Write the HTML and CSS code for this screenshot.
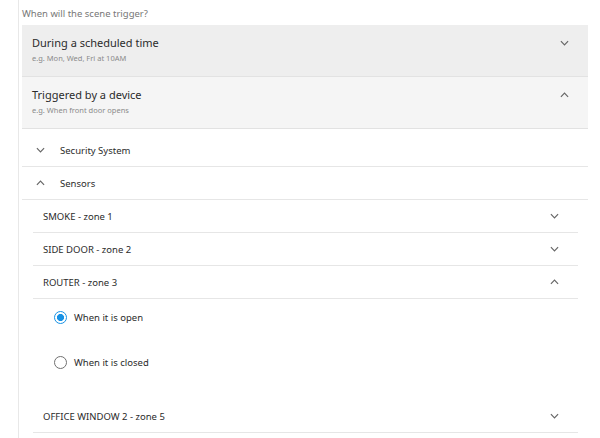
FILE: index.html
```html
<!DOCTYPE html>
<html>
<head>
<meta charset="utf-8">
<link rel="stylesheet" href="styles.css">
</head>
<body>
<div class="page">
  <div class="question">When will the scene trigger?</div>

  <div class="option option-dark">
    <div class="option-head">
      <span class="option-title">During a scheduled time</span>
      <svg class="chev" viewBox="0 0 10 6"><polyline points="1,1 5,5 9,1"/></svg>
    </div>
    <div class="option-sub">e.g. Mon, Wed, Fri at 10AM</div>
  </div>

  <div class="option option-light">
    <div class="option-head">
      <span class="option-title">Triggered by a device</span>
      <svg class="chev" viewBox="0 0 10 6"><polyline points="1,5 5,1 9,5"/></svg>
    </div>
    <div class="option-sub">e.g. When front door opens</div>
  </div>

  <div class="groups">
    <div class="group-row">
      <svg class="chev" viewBox="0 0 10 6"><polyline points="1,1 5,5 9,1"/></svg>
      <span class="group-label">Security System</span>
    </div>
    <div class="group-row">
      <svg class="chev" viewBox="0 0 10 6"><polyline points="1,5 5,1 9,5"/></svg>
      <span class="group-label">Sensors</span>
    </div>

    <div class="zones">
      <div class="zone-row">
        <span class="zone-label">SMOKE - zone 1</span>
        <svg class="chev" viewBox="0 0 10 6"><polyline points="1,1 5,5 9,1"/></svg>
      </div>
      <div class="zone-row">
        <span class="zone-label">SIDE DOOR - zone 2</span>
        <svg class="chev" viewBox="0 0 10 6"><polyline points="1,1 5,5 9,1"/></svg>
      </div>
      <div class="zone-row">
        <span class="zone-label">ROUTER - zone 3</span>
        <svg class="chev" viewBox="0 0 10 6"><polyline points="1,5 5,1 9,5"/></svg>
      </div>
      <div class="radios">
        <div class="radio-item">
          <span class="radio radio-on"></span>
          <span class="radio-label">When it is open</span>
        </div>
        <div class="radio-item">
          <span class="radio"></span>
          <span class="radio-label">When it is closed</span>
        </div>
      </div>
      <div class="zone-row">
        <span class="zone-label">OFFICE WINDOW 2 - zone 5</span>
        <svg class="chev" viewBox="0 0 10 6"><polyline points="1,1 5,5 9,1"/></svg>
      </div>
    </div>
  </div>
</div>
</body>
</html>
```

FILE: styles.css
```css
html, body {
  margin: 0;
  padding: 0;
  background: #ffffff;
}

body {
  font-family: "Noto Sans", "Liberation Sans", sans-serif;
  color: #2b2b2b;
}

.page {
  margin-left: 18px;
  margin-right: 12px;
  border-left: 1px solid #e8e8e8;
  padding-left: 3px;
  min-height: 438px;
  box-sizing: border-box;
}

.question {
  padding-top: 8px;
  height: 12px;
  line-height: 12px;
  font-size: 9.5px;
  color: #777777;
  margin-bottom: 5px;
}

.option {
  padding: 11px 19px 13px 10px;
  border-bottom: 1px solid #e2e2e2;
}

.option-dark {
  background: #eeeeee;
}

.option-light {
  background: #f5f5f5;
}

.option-head {
  display: flex;
  align-items: center;
  justify-content: space-between;
  height: 14px;
}

.option-title {
  font-size: 11px;
  line-height: 14px;
  color: #2b2b2b;
}

.option-sub {
  margin-top: 3px;
  font-size: 7.5px;
  line-height: 10px;
  color: #8a8a8a;
}

.chev {
  width: 9px;
  height: 6px;
  fill: none;
  stroke: #666666;
  stroke-width: 1.3;
  flex: none;
}

.groups {
  margin-top: 5px;
}

.group-row {
  display: flex;
  align-items: center;
  height: 32px;
  border-bottom: 1px solid #e6e6e6;
  padding-left: 14px;
}

.group-row .chev {
  margin-right: 15px;
}

.group-label {
  font-size: 9.5px;
}

.zones {
  margin-left: 11px;
  margin-right: 10px;
}

.zone-row {
  display: flex;
  align-items: center;
  justify-content: space-between;
  height: 32px;
  border-bottom: 1px solid #e6e6e6;
  padding-left: 10px;
  padding-right: 19px;
}

.zone-label {
  font-size: 9.5px;
}

.radios {
  padding: 8px 0 28px 21px;
  display: flex;
  flex-direction: column;
  gap: 25px;
}

.radio-item {
  display: flex;
  align-items: center;
  height: 20px;
}

.radio {
  width: 13px;
  height: 13px;
  box-sizing: border-box;
  border-radius: 50%;
  border: 1.5px solid #707070;
  margin-right: 7px;
  flex: none;
}

.radio-on {
  border-color: #1792e5;
  background: radial-gradient(circle, #1792e5 0 3.3px, #ffffff 3.8px);
}

.radio-label {
  font-size: 9.5px;
}
```
